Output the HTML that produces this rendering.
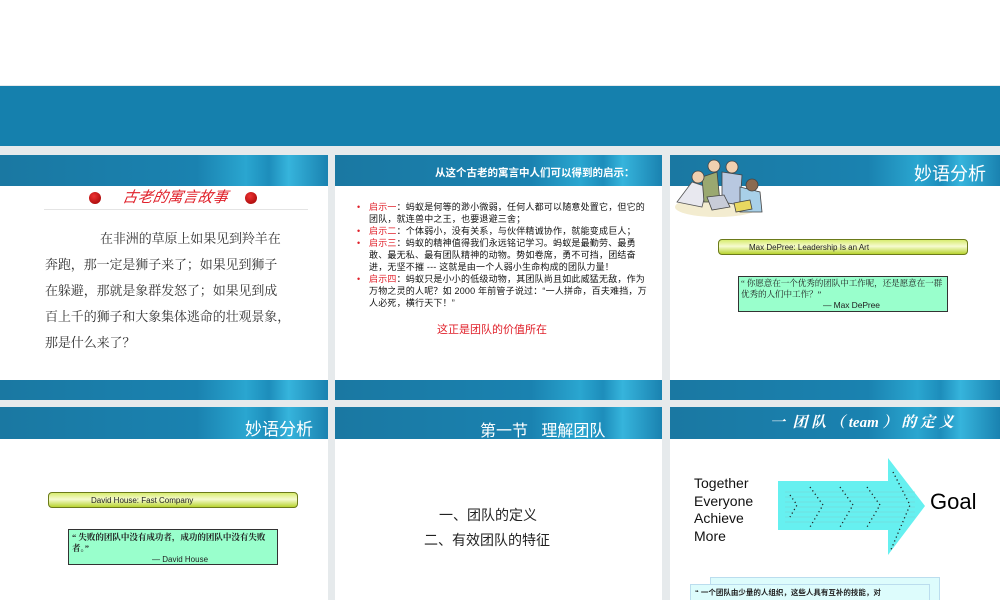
<!DOCTYPE html>
<html><head><meta charset="utf-8"><style>
*{margin:0;padding:0;box-sizing:border-box}
body{width:1000px;height:600px;overflow:hidden;background:#e6eaec;position:relative;font-family:"Liberation Sans","Noto Sans CJK SC",sans-serif}
.a{position:absolute}
.band{position:absolute;background:linear-gradient(90deg,#1a78a2 0%,#1a82b0 60%,#2aa6d0 75%,#1d8dbb 82%,#36b4dc 88%,#1a82b0 100%)}
.slide{position:absolute;background:#fff;overflow:hidden}
.cn{font-family:"Liberation Sans","Noto Sans CJK SC",sans-serif}
.serif{font-family:"Liberation Serif","Noto Serif CJK SC",serif}
.gbar{position:absolute;border:1px solid #6b7a1a;border-radius:4px;background:linear-gradient(#d8ec70,#f6fbd0 45%,#b8d430);font-size:8px;color:#222}
.qbox{position:absolute;background:#99ffcc;border:1.5px solid #333;font-size:8px;color:#222}
.red{color:#e0202a}
</style></head><body>
<div class="a" style="left:0;top:0;width:1000px;height:85px;background:#fff"></div>
<div class="band" style="left:0;top:86px;width:1000px;height:60px;background:#1580ad"></div>

<!-- Row 1 -->
<div class="slide" style="left:0;top:155px;width:328px;height:245px">
 <div class="band" style="left:0;top:0;width:328px;height:31px"></div>
 <div class="band" style="left:0;top:225px;width:328px;height:20px"></div>
 <div class="a" style="left:89px;top:37px;width:12px;height:12px;border-radius:50%;background:radial-gradient(circle at 40% 35%,#e33,#900)"></div>
 <div class="a" style="left:245px;top:37px;width:12px;height:12px;border-radius:50%;background:radial-gradient(circle at 40% 35%,#e33,#900)"></div>
 <div class="a red" style="left:123px;top:31px;font-size:15px;font-style:italic;transform:skewX(-10deg)">古老的寓言故事</div>
 <div class="a" style="left:44px;top:54px;width:264px;height:1px;background:#e4e4e4"></div>
 <div class="a serif" style="left:45px;top:71px;width:270px;font-size:13px;letter-spacing:-0.1px;line-height:26px;color:#333;white-space:nowrap"><span style="padding-left:55px">在非洲的草原上如果见到羚羊在</span><br>奔跑，那一定是狮子来了；如果见到狮子<br>在躲避，那就是象群发怒了；如果见到成<br>百上千的狮子和大象集体逃命的壮观景象，<br>那是什么来了？</div>
</div>

<div class="slide" style="left:335px;top:155px;width:327px;height:245px">
 <div class="band" style="left:0;top:0;width:327px;height:31px"></div>
 <div class="band" style="left:0;top:225px;width:327px;height:20px"></div>
 <div class="a" style="left:100px;top:10px;font-size:10.5px;font-weight:bold;color:#fff">从这个古老的寓言中人们可以得到的启示：</div>
 <div class="a" style="left:20px;top:46px;width:295px;font-size:9px;letter-spacing:0.2px;line-height:12px;color:#111">
  <div style="position:relative;padding-left:14px"><span class="a red" style="left:2px">•</span><span class="red">启示一</span>：蚂蚁是何等的渺小微弱，任何人都可以随意处置它，但它的团队，就连兽中之王，也要退避三舍；</div>
  <div style="position:relative;padding-left:14px"><span class="a red" style="left:2px">•</span><span class="red">启示二</span>：个体弱小，没有关系，与伙伴精诚协作，就能变成巨人；</div>
  <div style="position:relative;padding-left:14px"><span class="a red" style="left:2px">•</span><span class="red">启示三</span>：蚂蚁的精神值得我们永远铭记学习。蚂蚁是最勤劳、最勇敢、最无私、最有团队精神的动物。势如卷席，勇不可挡，团结奋进，无坚不摧 --- 这就是由一个人弱小生命构成的团队力量！</div>
  <div style="position:relative;padding-left:14px"><span class="a red" style="left:2px">•</span><span class="red">启示四</span>：蚂蚁只是小小的低级动物，其团队尚且如此威猛无敌，作为万物之灵的人呢？如 2000 年前管子说过：“一人拼命，百夫难挡，万人必死，横行天下！”</div>
 </div>
 <div class="a red" style="left:102px;top:166px;font-size:11px">这正是团队的价值所在</div>
</div>

<div class="slide" style="left:670px;top:155px;width:330px;height:245px">
 <div class="band" style="left:0;top:0;width:330px;height:31px"></div>
 <div class="band" style="left:0;top:225px;width:330px;height:20px"></div>
 <div class="a" style="left:244px;top:5px;font-size:18px;color:#fff">妙语分析</div>
 <svg class="a" style="left:2px;top:2px" width="95" height="62" viewBox="0 0 95 62">
  <ellipse cx="45" cy="50" rx="42" ry="10" fill="#f3ecd0"/>
  <path d="M5 45 L20 25 L35 30 L30 50Z" fill="#e8e8ef" stroke="#555" stroke-width=".8"/>
  <path d="M30 20 L45 15 L48 45 L32 45Z" fill="#9aa870" stroke="#444" stroke-width=".8"/>
  <path d="M50 15 L70 18 L68 48 L50 45Z" fill="#b8c8e0" stroke="#444" stroke-width=".8"/>
  <path d="M68 30 L88 35 L90 55 L68 55Z" fill="#a8d0e8" stroke="#444" stroke-width=".8"/>
  <circle cx="26" cy="20" r="6" fill="#f0d0b0" stroke="#444" stroke-width=".8"/>
  <circle cx="42" cy="9" r="6" fill="#f0d0b0" stroke="#444" stroke-width=".8"/>
  <circle cx="60" cy="10" r="6" fill="#f0d0b0" stroke="#444" stroke-width=".8"/>
  <circle cx="80" cy="28" r="6" fill="#8a6a50" stroke="#444" stroke-width=".8"/>
  <path d="M35 40 L52 38 L58 50 L40 53Z" fill="#c8ccd8" stroke="#444" stroke-width=".8"/>
  <path d="M62 46 L78 43 L80 52 L64 55Z" fill="#e8d860" stroke="#444" stroke-width=".8"/>
 </svg>
 <div class="gbar" style="left:48px;top:84px;width:250px;height:16px;padding:3px 0 0 30px">Max DePree: Leadership Is an Art</div>
 <div class="qbox serif" style="left:68px;top:121px;width:210px;height:36px;padding:1px 2px;line-height:11px;font-size:8.6px;letter-spacing:-0.1px">“ 你愿意在一个优秀的团队中工作呢，还是愿意在一群优秀的人们中工作？”<div class="cn" style="padding-left:82px;font-size:8.5px">— Max DePree</div></div>
</div>

<!-- Row 2 -->
<div class="slide" style="left:0;top:407px;width:328px;height:193px">
 <div class="band" style="left:0;top:0;width:328px;height:32px"></div>
 <div class="a" style="left:245px;top:8px;font-size:17px;color:#fff">妙语分析</div>
 <div class="gbar" style="left:48px;top:85px;width:250px;height:16px;padding:3px 0 0 42px">David House: Fast Company</div>
 <div class="qbox serif" style="left:68px;top:122px;width:210px;height:36px;padding:2px 3px;line-height:11px;font-weight:bold;font-size:8.5px">“ 失败的团队中没有成功者，成功的团队中没有失败者。”<div class="cn" style="padding-left:80px;font-size:8px;font-weight:normal">— David House</div></div>
</div>

<div class="slide" style="left:335px;top:407px;width:327px;height:193px">
 <div class="band" style="left:0;top:0;width:327px;height:32px"></div>
 <div class="a" style="left:145px;top:10px;font-size:16px;color:#fff;white-space:pre">第一节   理解团队</div>
 <div class="a" style="left:104px;top:98px;font-size:14px;color:#222">一、团队的定义</div>
 <div class="a" style="left:89px;top:123px;font-size:14px;color:#222">二、有效团队的特征</div>
</div>

<div class="slide" style="left:670px;top:407px;width:330px;height:193px">
 <div class="band" style="left:0;top:0;width:330px;height:32px"></div>
 <div class="a serif" style="left:100px;top:4px;font-size:15px;color:#fff;font-weight:bold;font-style:italic;white-space:pre">一  团 队 （ team ） 的 定 义</div>
 <div class="a" style="left:24px;top:68px;font-size:14px;line-height:17.5px;color:#111">Together<br>Everyone<br>Achieve<br>More</div>
 <svg class="a" style="left:105px;top:50px" width="160" height="100" viewBox="0 0 160 100">
  <path d="M3 24 H113 V1 L150 49 L113 98 V73 H3Z" fill="#66f0f0"/>
  <g stroke="#7ad0d0" stroke-width=".6">
   <line x1="10" y1="35" x2="140" y2="35"/><line x1="10" y1="40" x2="140" y2="40"/><line x1="10" y1="45" x2="140" y2="45"/><line x1="10" y1="50" x2="140" y2="50"/><line x1="10" y1="55" x2="140" y2="55"/><line x1="10" y1="60" x2="140" y2="60"/><line x1="10" y1="65" x2="130" y2="65"/>
  </g>
  <g fill="none" stroke="#222" stroke-width="1.3" stroke-dasharray="1.2 3">
   <path d="M15 38 L22 48 L15 60"/>
   <path d="M35 30 L48 48 L35 70"/><path d="M65 30 L78 48 L65 70"/><path d="M92 30 L105 48 L92 70"/>
   <path d="M118 15 L135 48 L115 95"/>
  </g>
 </svg>
 <div class="a" style="left:260px;top:82px;font-size:22px;color:#000">Goal</div>
 <div class="a" style="left:40px;top:170px;width:230px;height:30px;background:#ddfcfc;border:1px solid #bde"></div>
 <div class="a" style="left:20px;top:177px;width:240px;height:20px;background:#ddfcfc;border:1px solid #bde;font-size:7.5px;font-weight:bold;padding:2px 4px;color:#222">“ 一个团队由少量的人组织，这些人具有互补的技能，对</div>
</div>
</body></html>
